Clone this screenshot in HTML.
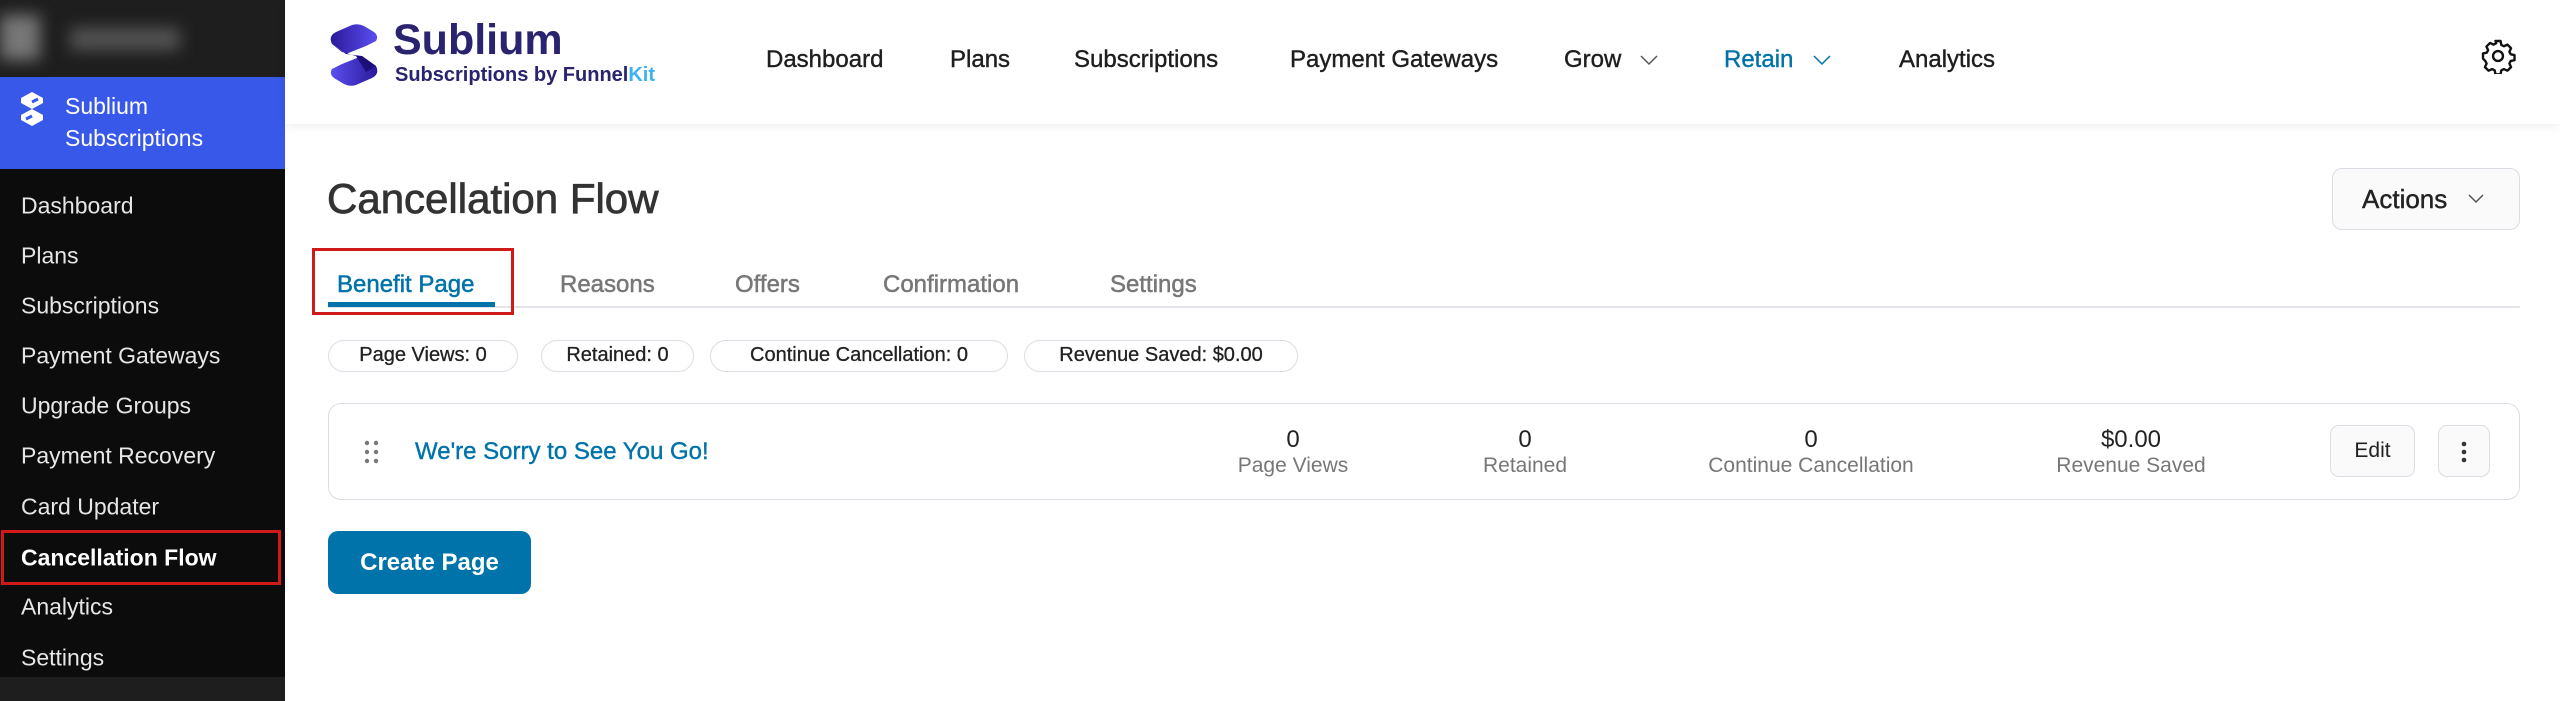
<!DOCTYPE html>
<html><head><meta charset="utf-8"><style>
*{margin:0;padding:0;box-sizing:border-box}
body{width:2560px;height:701px;overflow:hidden;background:#fff;font-family:"Liberation Sans",sans-serif;position:relative}
.a{position:absolute;white-space:nowrap}
.side{position:absolute;left:0;top:0;width:285px;height:701px;background:#0c0c0c}
.mi{position:absolute;left:21px;font-size:23px;color:#e6e6e6;transform:translateY(-50%)}
.nav{position:absolute;top:60px;transform:translateY(-50%);font-size:24px;color:#1e1e1e;-webkit-text-stroke:0.4px #1e1e1e}
.tab{position:absolute;top:285px;transform:translateY(-50%);font-size:24px;color:#777;-webkit-text-stroke:0.5px #777}
.chip{position:absolute;top:340px;height:32px;border:1.5px solid #dcdce4;border-radius:16px;font-size:20px;color:#222;line-height:29px;text-align:center;-webkit-text-stroke:0.3px #222}
.sn{position:absolute;text-align:center;transform:translateX(-50%)}
.sn b{display:block;font-weight:normal;font-size:24px;color:#222;line-height:26px}
.sn span{display:block;font-size:21px;color:#777;line-height:26px}
</style></head><body>
<div class="side">
 <div class="a" style="left:0;top:0;width:285px;height:77px;background:#1e1e1e"></div>
 <div class="a" style="left:0;top:15px;width:40px;height:45px;background:#777;filter:blur(8px)"></div>
 <div class="a" style="left:70px;top:28px;width:110px;height:22px;background:#555;filter:blur(8px)"></div>
 <div class="a" style="left:0;top:77px;width:285px;height:92px;background:#3858e9"></div>
 <svg class="a" style="left:18px;top:90px" width="28" height="38" viewBox="0 0 28 38"><path d="M14 2 L25 8 L25 13 L14 19 L25 25 L25 30 L14 36 L3 30 L3 25 L14 19 L3 13 L3 8 Z" fill="#fff"/><path d="M14 12 L20 9 M8 29 L14 26" stroke="#3858e9" stroke-width="3"/></svg>
 <div class="a" style="left:65px;top:90px;font-size:23px;color:#fff;line-height:32px">Sublium<br>Subscriptions</div>
 <div class="mi" style="top:206px">Dashboard</div>
 <div class="mi" style="top:256px">Plans</div>
 <div class="mi" style="top:306px">Subscriptions</div>
 <div class="mi" style="top:356px">Payment Gateways</div>
 <div class="mi" style="top:406px">Upgrade Groups</div>
 <div class="mi" style="top:456px">Payment Recovery</div>
 <div class="mi" style="top:507px">Card Updater</div>
 <div class="a" style="left:1px;top:530px;width:280px;height:55px;border:3px solid #d01a1a"></div>
 <div class="mi" style="top:558px;color:#fff;font-weight:bold">Cancellation Flow</div>
 <div class="mi" style="top:607px">Analytics</div>
 <div class="mi" style="top:658px">Settings</div>
 <div class="a" style="left:0;top:677px;width:285px;height:24px;background:#1e1e1e"></div>
</div>
<div class="a" style="left:285px;top:0;width:2275px;height:124px;background:#fff;box-shadow:0 2px 10px rgba(0,0,0,0.07)"></div>
<svg class="a" style="left:326px;top:24px" width="56" height="62" viewBox="0 0 56 62"><defs><linearGradient id="g" x1="0" y1="0" x2="1" y2="0"><stop offset="0" stop-color="#2a1a9a"/><stop offset="1" stop-color="#5b4ef0"/></linearGradient><linearGradient id="h" x1="0" y1="0" x2="1" y2="0"><stop offset="0" stop-color="#5b4ef0"/><stop offset="1" stop-color="#2a1a9a"/></linearGradient></defs><path d="M6 20 Q2 12 10 8 L26 1 Q32 -1 38 2 L48 8 Q53 12 50 17 L40 22 L20 30 Z" fill="url(#g)"/><path d="M50 42 Q54 50 46 54 L30 61 Q24 63 18 60 L8 54 Q3 50 6 45 L16 40 L36 32 Z" fill="url(#h)"/><path d="M6 20 L20 30 L36 32 L50 42 L40 48 L30 32 L16 28 Z" fill="#1c0f7a"/></svg>
<div class="a" style="left:393px;top:16px;font-size:43px;font-weight:bold;color:#2a2370">Sublium</div>
<div class="a" style="left:395px;top:64px;font-size:20px;font-weight:bold;color:#2a2370">Subscriptions by Funnel<span style="color:#3db2f0">Kit</span></div>
<div class="nav" style="left:766px">Dashboard</div>
<div class="nav" style="left:950px">Plans</div>
<div class="nav" style="left:1074px">Subscriptions</div>
<div class="nav" style="left:1290px">Payment Gateways</div>
<div class="nav" style="left:1564px">Grow</div>
<svg class="a" style="left:1640px;top:54px" width="18" height="12"><path d="M1 2 L9 10 L17 2" fill="none" stroke="#555" stroke-width="1.5"/></svg>
<div class="nav" style="left:1724px;color:#0073aa;-webkit-text-stroke:0.4px #0073aa">Retain</div>
<svg class="a" style="left:1813px;top:54px" width="18" height="12"><path d="M1 2 L9 10 L17 2" fill="none" stroke="#0073aa" stroke-width="1.5"/></svg>
<div class="nav" style="left:1899px">Analytics</div>
<svg class="a" style="left:2480px;top:38px" width="36" height="36" viewBox="0 0 24 24"><path d="M10.3 2h3.4l.5 2.6 1.7.9 2.4-1.1 2.4 2.4-1.1 2.4.9 1.7 2.5.5v3.4l-2.5.5-.9 1.7 1.1 2.4-2.4 2.4-2.4-1.1-1.7.9-.5 2.6h-3.4l-.5-2.6-1.7-.9-2.4 1.1-2.4-2.4 1.1-2.4-.9-1.7L2 13.7v-3.4l2.5-.5.9-1.7-1.1-2.4 2.4-2.4 2.4 1.1 1.7-.9z" fill="none" stroke="#111" stroke-width="1.6" stroke-linejoin="round"/><circle cx="12" cy="12" r="3.3" fill="none" stroke="#111" stroke-width="1.6"/></svg>
<div class="a" style="left:327px;top:175px;font-size:42px;color:#333;-webkit-text-stroke:0.8px #333">Cancellation Flow</div>
<div class="a" style="left:2332px;top:168px;width:188px;height:62px;border:1.5px solid #dcdce4;border-radius:10px;background:#fafafa"></div>
<div class="a" style="left:2362px;top:184px;font-size:26px;color:#222;-webkit-text-stroke:0.4px #222">Actions</div>
<svg class="a" style="left:2468px;top:193px" width="16" height="11"><path d="M1 2 L8 9 L15 2" fill="none" stroke="#555" stroke-width="1.5"/></svg>
<div class="a" style="left:328px;top:306px;width:2192px;height:2px;background:#e4e4ea"></div>
<div class="a" style="left:328px;top:302px;width:167px;height:5px;background:#0073aa"></div>
<div class="a" style="left:312px;top:248px;width:202px;height:67px;border:3px solid #d01a1a"></div>
<div class="tab" style="left:337px;color:#0073aa;-webkit-text-stroke:0.5px #0073aa">Benefit Page</div>
<div class="tab" style="left:560px">Reasons</div>
<div class="tab" style="left:735px">Offers</div>
<div class="tab" style="left:883px">Confirmation</div>
<div class="tab" style="left:1110px">Settings</div>
<div class="chip" style="left:328px;width:190px">Page Views: 0</div>
<div class="chip" style="left:541px;width:153px">Retained: 0</div>
<div class="chip" style="left:710px;width:298px">Continue Cancellation: 0</div>
<div class="chip" style="left:1024px;width:274px">Revenue Saved: $0.00</div>
<div class="a" style="left:328px;top:403px;width:2192px;height:97px;border:1.5px solid #dcdce4;border-radius:13px"></div>
<svg class="a" style="left:364px;top:440px" width="16" height="24"><g fill="#777"><circle cx="3" cy="3" r="2.2"/><circle cx="12" cy="3" r="2.2"/><circle cx="3" cy="12" r="2.2"/><circle cx="12" cy="12" r="2.2"/><circle cx="3" cy="21" r="2.2"/><circle cx="12" cy="21" r="2.2"/></g></svg>
<div class="a" style="left:415px;top:438px;font-size:24px;color:#0073aa;-webkit-text-stroke:0.4px #0073aa">We're Sorry to See You Go!</div>
<div class="sn" style="left:1293px;top:427px"><b>0</b><span>Page Views</span></div>
<div class="sn" style="left:1525px;top:427px"><b>0</b><span>Retained</span></div>
<div class="sn" style="left:1811px;top:427px"><b>0</b><span>Continue Cancellation</span></div>
<div class="sn" style="left:2131px;top:427px"><b>$0.00</b><span>Revenue Saved</span></div>
<div class="a" style="left:2330px;top:425px;width:85px;height:52px;border:1.5px solid #dcdce4;border-radius:9px;background:#fafafa;font-size:21px;color:#222;text-align:center;line-height:49px">Edit</div>
<div class="a" style="left:2438px;top:425px;width:52px;height:52px;border:1.5px solid #dcdce4;border-radius:9px;background:#fafafa"></div>
<svg class="a" style="left:2460px;top:441px" width="8" height="22"><g fill="#333"><circle cx="4" cy="3" r="2.3"/><circle cx="4" cy="11" r="2.3"/><circle cx="4" cy="19" r="2.3"/></g></svg>
<div class="a" style="left:328px;top:531px;width:203px;height:63px;background:#0073aa;border-radius:10px;color:#fff;font-size:24px;font-weight:bold;text-align:center;line-height:63px">Create Page</div>
</body></html>
